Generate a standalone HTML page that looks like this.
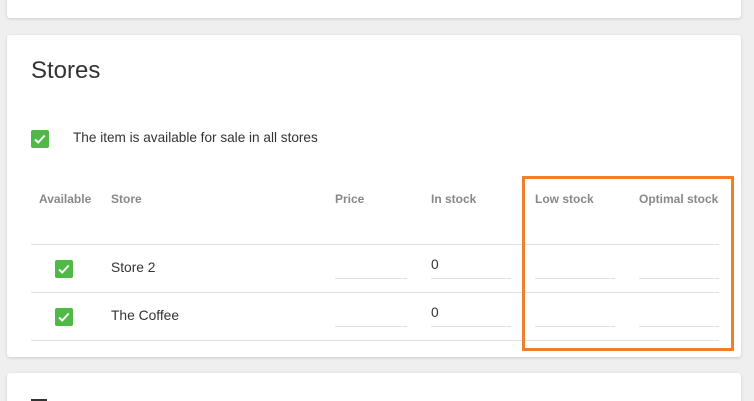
<!DOCTYPE html>
<html><head><style>
html,body{margin:0;width:754px;height:401px;overflow:hidden;}
body{background:#efefef;position:relative;font-family:"Liberation Sans",Arial,sans-serif;}
.card{position:absolute;left:7px;width:734px;background:#fff;border-radius:3px;box-shadow:0 1px 3px rgba(0,0,0,0.15);}
.a{position:absolute;white-space:nowrap;}
.cb{position:absolute;width:18px;height:18px;background:#4fb846;border-radius:2px;}
.cb svg{position:absolute;left:2px;top:2px}
.h{font-size:12px;font-weight:bold;color:#888;top:192px}
.hl{position:absolute;height:1px;background:#e0e0e0;}
.t{font-size:13.8px;color:#333;}
</style></head><body>
<div class="card" style="top:-10px;height:28px"></div>
<div class="card" style="top:35px;height:322px"></div>
<div class="card" style="top:373px;height:40px"></div>
<div class="a" style="left:31px;top:57px;font-size:24px;color:#333">Stores</div>
<div class="cb" style="left:31px;top:130px"><svg width="14" height="14" viewBox="0 0 14 14"><path d="M2 7.5l3.2 3 6.5-7" stroke="#fff" stroke-width="2" fill="none"/></svg></div>
<div class="a t" style="left:73px;top:130px;font-size:13.6px">The item is available for sale in all stores</div>
<div class="a h" style="left:39px">Available</div>
<div class="a h" style="left:111px">Store</div>
<div class="a h" style="left:335px">Price</div>
<div class="a h" style="left:431px">In stock</div>
<div class="a h" style="left:535px">Low stock</div>
<div class="a h" style="left:639px">Optimal stock</div>
<div class="hl" style="left:31px;width:688px;top:244px"></div>
<div class="hl" style="left:31px;width:688px;top:292px"></div>
<div class="hl" style="left:31px;width:688px;top:340px"></div>
<div class="cb" style="left:55px;top:260px"><svg width="14" height="14" viewBox="0 0 14 14"><path d="M2 7.5l3.2 3 6.5-7" stroke="#fff" stroke-width="2" fill="none"/></svg></div>
<div class="cb" style="left:55px;top:308px"><svg width="14" height="14" viewBox="0 0 14 14"><path d="M2 7.5l3.2 3 6.5-7" stroke="#fff" stroke-width="2" fill="none"/></svg></div>
<div class="a t" style="left:111px;top:260px">Store 2</div>
<div class="a t" style="left:111px;top:308px">The Coffee</div>
<div class="a t" style="left:431px;top:257px">0</div>
<div class="a t" style="left:431px;top:305px">0</div>
<div class="hl" style="left:335px;width:72px;top:278px"></div>
<div class="hl" style="left:431px;width:80px;top:278px"></div>
<div class="hl" style="left:535px;width:80px;top:278px"></div>
<div class="hl" style="left:639px;width:80px;top:278px"></div>
<div class="hl" style="left:335px;width:72px;top:326px"></div>
<div class="hl" style="left:431px;width:80px;top:326px"></div>
<div class="hl" style="left:535px;width:80px;top:326px"></div>
<div class="hl" style="left:639px;width:80px;top:326px"></div>
<div style="position:absolute;left:522px;top:176px;width:206px;height:169px;border:3px solid #f07f2d"></div>
<div style="position:absolute;left:31px;top:399px;width:16px;height:2px;background:#333"></div>
</body></html>
